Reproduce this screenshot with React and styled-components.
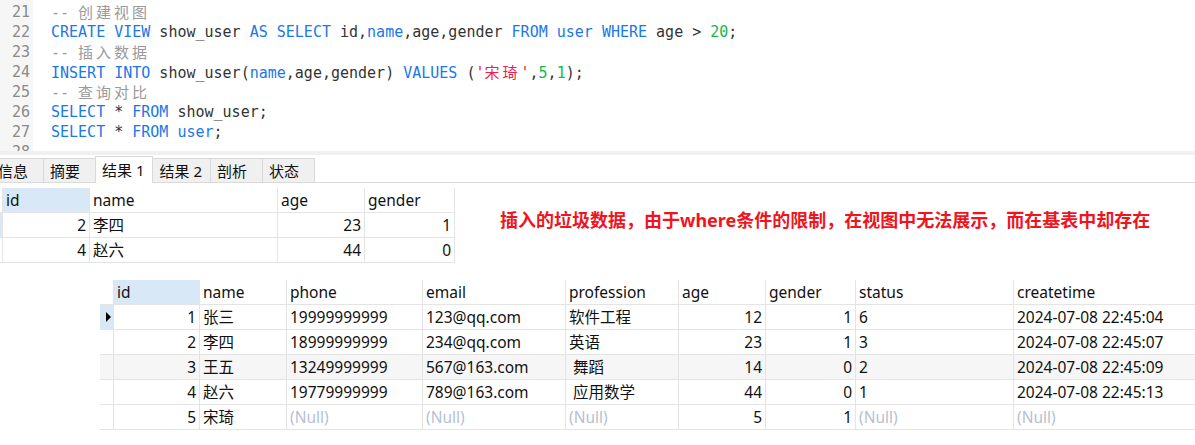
import React from 'react'
import styled, { createGlobalStyle } from 'styled-components'

const Global = createGlobalStyle`
  body {
    margin: 0;
    background: #fff;
    font-family: "Noto Sans", "Noto Sans CJK SC", sans-serif;
  }
`

const Page = styled.div`
  width: 1195px;
  height: 445px;
  overflow: hidden;
  background: #fff;
`

const Editor = styled.div`
  display: flex;
  height: 151px;
  overflow: hidden;
  font-family: "DejaVu Sans Mono", "Noto Sans CJK SC", monospace;
  font-size: 15px;
`

const Gutter = styled.div`
  width: 33px;
  flex-shrink: 0;
  background: #f6f6f6;
  padding-top: 2px;
`

const LineNo = styled.div`
  height: 20px;
  line-height: 20px;
  text-align: right;
  padding-right: 3px;
  color: #8a8a8a;
`

const Code = styled.div`
  padding: 2px 0 0 18px;
  color: #333;
`

const CodeLine = styled.div`
  height: 20px;
  line-height: 20px;
  white-space: pre;
`

const Kw = styled.span`
  color: #1a78e8;
`
const Cm = styled.span`
  color: #9a9a9a;
`
const Num = styled.span`
  color: #14b84c;
`
const Str = styled.span`
  color: #f0204a;
`
const Wide = styled.span`
  font-family: "Noto Sans CJK SC", sans-serif;
  letter-spacing: 3px;
`

const Splitter = styled.div`
  height: 4px;
  background: #f0f0f0;
`

const TabBar = styled.div`
  display: flex;
  align-items: flex-end;
  height: 27px;
  margin-left: -9px;
  border-bottom: 1px solid #dadada;
  font-family: "Noto Sans", "Noto Sans CJK SC", sans-serif;
  font-size: 15px;
`

const Tab = styled.div`
  box-sizing: border-box;
  min-width: 53px;
  height: ${p => (p.$active ? '27px' : '24px')};
  line-height: ${p => (p.$active ? '27px' : '24px')};
  padding: 0 8px 0 6px;
  margin-right: -1px;
  margin-bottom: ${p => (p.$active ? '-1px' : '0')};
  border: 1px solid #d9d9d9;
  border-bottom: none;
  background: ${p => (p.$active ? '#fff' : '#f0f0f0')};
  color: #111;
  position: relative;
  z-index: ${p => (p.$active ? 1 : 0)};
  white-space: pre;
`

const ResultRow = styled.div`
  display: flex;
  align-items: flex-start;
  margin-top: 5px;
`

const Note = styled.div`
  margin: 20px 0 0 45px;
  font-family: "Noto Sans", "Noto Sans CJK SC", sans-serif;
  font-size: 18px;
  line-height: 24px;
  font-weight: bold;
  color: #f0141e;
  white-space: nowrap;
`

const Spacer = styled.div`
  height: 17px;
`

const Grid = styled.div`
  display: grid;
  grid-template-columns: ${p => p.$cols};
  margin-left: ${p => p.$left};
  font-family: "Noto Sans", "Noto Sans CJK SC", sans-serif;
  font-size: 15.5px;
`

const Cell = styled.div`
  height: 24px;
  line-height: 24px;
  padding: 0 3px;
  border-right: 1px solid #e4e4e4;
  border-bottom: 1px solid #e4e4e4;
  text-align: ${p => p.$align || 'left'};
  color: ${p => (p.$null ? '#b6bfd2' : '#111')};
  background: ${p => (p.$sel ? '#d9e8f7' : p.$shade ? '#f6f6f6' : '#fff')};
  white-space: pre;
  overflow: hidden;
`

const Indicator = styled.div`
  height: 24px;
  border-right: 1px solid #e4e4e4;
  border-bottom: 1px solid #e4e4e4;
  background: ${p => (p.$sel ? '#d9e8f7' : p.$shade ? '#f6f6f6' : '#fff')};
  display: flex;
  align-items: center;
  padding-left: 6px;
`

const Arrow = styled.div`
  width: 0;
  height: 0;
  border-left: 5px solid #000;
  border-top: 5px solid transparent;
  border-bottom: 5px solid transparent;
`

const tabs = ['信息', '摘要', '结果 1', '结果 2', '剖析', '状态']

const smallCols = [
  { key: 'id', align: 'right' },
  { key: 'name' },
  { key: 'age', align: 'right' },
  { key: 'gender', align: 'right' },
]
const smallRows = [
  { id: 2, name: '李四', age: 23, gender: 1 },
  { id: 4, name: '赵六', age: 44, gender: 0 },
]

const bigCols = [
  { key: 'id', align: 'right' },
  { key: 'name' },
  { key: 'phone' },
  { key: 'email' },
  { key: 'profession' },
  { key: 'age', align: 'right' },
  { key: 'gender', align: 'right' },
  { key: 'status' },
  { key: 'createtime' },
]
const bigRows = [
  { id: 1, name: '张三', phone: '19999999999', email: '123@qq.com', profession: '软件工程', age: 12, gender: 1, status: 6, createtime: '2024-07-08 22:45:04' },
  { id: 2, name: '李四', phone: '18999999999', email: '234@qq.com', profession: '英语', age: 23, gender: 1, status: 3, createtime: '2024-07-08 22:45:07' },
  { id: 3, name: '王五', phone: '13249999999', email: '567@163.com', profession: ' 舞蹈', age: 14, gender: 0, status: 2, createtime: '2024-07-08 22:45:09' },
  { id: 4, name: '赵六', phone: '19779999999', email: '789@163.com', profession: ' 应用数学', age: 44, gender: 0, status: 1, createtime: '2024-07-08 22:45:13' },
  { id: 5, name: '宋琦', phone: null, email: null, profession: null, age: 5, gender: 1, status: null, createtime: null },
]

const DataGrid = ({ cols, rows, widths, left, shadeRow }) => (
  <Grid $cols={widths} $left={left}>
    <Indicator />
    {cols.map((c, i) => (
      <Cell key={c.key} $sel={i === 0}>{c.key}</Cell>
    ))}
    {rows.map((r, ri) => (
      <React.Fragment key={ri}>
        <Indicator $sel={ri === 0} $shade={ri === shadeRow}>
          {ri === 0 && <Arrow />}
        </Indicator>
        {cols.map(c => {
          const v = r[c.key]
          return (
            <Cell key={c.key} $align={c.align} $null={v === null} $shade={ri === shadeRow}>
              {v === null ? '(Null)' : v}
            </Cell>
          )
        })}
      </React.Fragment>
    ))}
  </Grid>
)

export default function App() {
  return (
    <Page>
      <Global />
      <Editor>
        <Gutter>
          {[21, 22, 23, 24, 25, 26, 27, 28].map(n => (
            <LineNo key={n}>{n}</LineNo>
          ))}
        </Gutter>
        <Code>
          <CodeLine><Cm>-- <Wide>创建视图</Wide></Cm></CodeLine>
          <CodeLine>
            <Kw>CREATE VIEW</Kw> show_user <Kw>AS SELECT</Kw> id,<Kw>name</Kw>,age,gender <Kw>FROM</Kw> <Kw>user</Kw> <Kw>WHERE</Kw> age &gt; <Num>20</Num>;
          </CodeLine>
          <CodeLine><Cm>-- <Wide>插入数据</Wide></Cm></CodeLine>
          <CodeLine>
            <Kw>INSERT INTO</Kw> show_user(<Kw>name</Kw>,age,gender) <Kw>VALUES</Kw> (<Str>'<Wide>宋琦</Wide>'</Str>,<Num>5</Num>,<Num>1</Num>);
          </CodeLine>
          <CodeLine><Cm>-- <Wide>查询对比</Wide></Cm></CodeLine>
          <CodeLine><Kw>SELECT</Kw> * <Kw>FROM</Kw> show_user;</CodeLine>
          <CodeLine><Kw>SELECT</Kw> * <Kw>FROM</Kw> <Kw>user</Kw>;</CodeLine>
          <CodeLine> </CodeLine>
        </Code>
      </Editor>
      <Splitter />
      <TabBar>
        {tabs.map(t => (
          <Tab key={t} $active={t === '结果 1'}>{t}</Tab>
        ))}
      </TabBar>
      <ResultRow>
        <DataGrid
          cols={smallCols}
          rows={smallRows}
          widths="14px 87px 188px 87px 90px"
          left="-11px"
        />
        <Note>插入的垃圾数据，由于where条件的限制，在视图中无法展示，而在基表中却存在</Note>
      </ResultRow>
      <Spacer />
      <DataGrid
        cols={bigCols}
        rows={bigRows}
        widths="14px 86px 87px 136px 143px 113px 87px 90px 158px 200px"
        left="100px"
        shadeRow={2}
      />
    </Page>
  )
}
